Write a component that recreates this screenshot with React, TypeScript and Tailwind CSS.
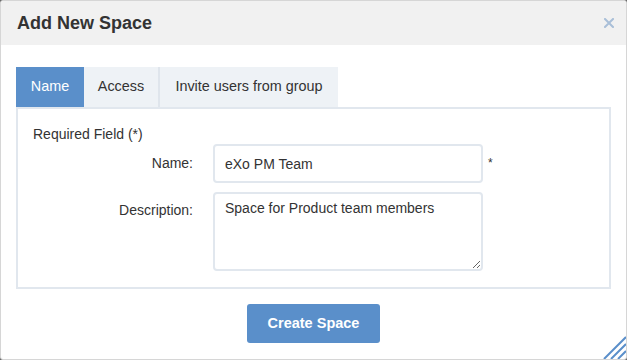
import React from "react";

const font = { fontFamily: '"Liberation Sans", Arial, sans-serif' };

export default function App() {
    return (
        <div className="w-[627px] h-[360px] bg-[#6b6b6b]" style={font}>
            <div className="relative w-full h-full flex flex-col bg-white border border-[#d6d6d6] rounded-[3px] overflow-hidden">
                {/* Header */}
                <div className="h-[44px] shrink-0 bg-[#f1f1f1] flex items-center justify-between pl-[16px] pr-[11px]">
                    <h1 className="text-[18px] font-bold text-[#333]">Add New Space</h1>
                    <button className="w-[12px] h-[12px] flex items-center justify-center">
                        <svg width="10" height="10" viewBox="0 0 10 10">
                            <path d="M1 1 L9 9 M9 1 L1 9" stroke="#a9bfd8" strokeWidth="2" strokeLinecap="square" />
                        </svg>
                    </button>
                </div>

                {/* Body */}
                <div className="flex flex-col px-[15px] pt-[22px]">
                    {/* Tabs */}
                    <div className="flex h-[40px] text-[14.4px]">
                        <div className="w-[68px] bg-[#5a8fca] text-white flex items-center justify-center">Name</div>
                        <div className="w-[76px] bg-[#eef2f6] text-[#333] flex items-center justify-center border-r-2 border-[#dfe5ec]">Access</div>
                        <div className="w-[178px] bg-[#eef2f6] text-[#333] flex items-center justify-center">Invite users from group</div>
                    </div>

                    {/* Panel */}
                    <div className="border-2 border-[#e1e7ee] h-[182px] pt-[15px] px-[15px] text-[14px] text-[#333]">
                        <div className="h-[20px] leading-[20px]">Required Field (*)</div>
                        <div className="grid grid-cols-[160px_270px_auto] gap-x-[20px] gap-y-[9px] items-start">
                            <label className="text-right h-[39px] leading-[39px]">Name:</label>
                            <input
                                className="h-[39px] w-[270px] border-2 border-[#e1e7ee] rounded-[4px] px-[10px] text-[14px] text-[#333] outline-none"
                                style={font}
                                defaultValue="eXo PM Team"
                            />
                            <span className="-ml-[15px] pt-[11px] text-[12px] leading-[16px]">*</span>
                            <label className="text-right pt-[8px] leading-[20px]">Description:</label>
                            <textarea
                                className="h-[79px] w-[270px] border-2 border-[#e1e7ee] rounded-[4px] px-[10px] py-[4px] text-[14px] leading-[20px] text-[#333] outline-none"
                                style={font}
                                defaultValue="Space for Product team members"
                            />
                            <span />
                        </div>
                    </div>

                    {/* Footer */}
                    <div className="flex justify-center pt-[15px]">
                        <button className="w-[133px] h-[39px] bg-[#5a8fca] text-white text-[14.5px] font-bold rounded-[3px]">
                            Create Space
                        </button>
                    </div>
                </div>

                {/* Resize grip */}
                <svg className="absolute right-0 bottom-0" width="24" height="24" viewBox="0 0 24 24">
                    <path d="M24 2 L2 24 M24 9 L9 24 M24 16 L16 24" stroke="#5a8fca" strokeWidth="2" />
                </svg>
            </div>
        </div>
    );
}
